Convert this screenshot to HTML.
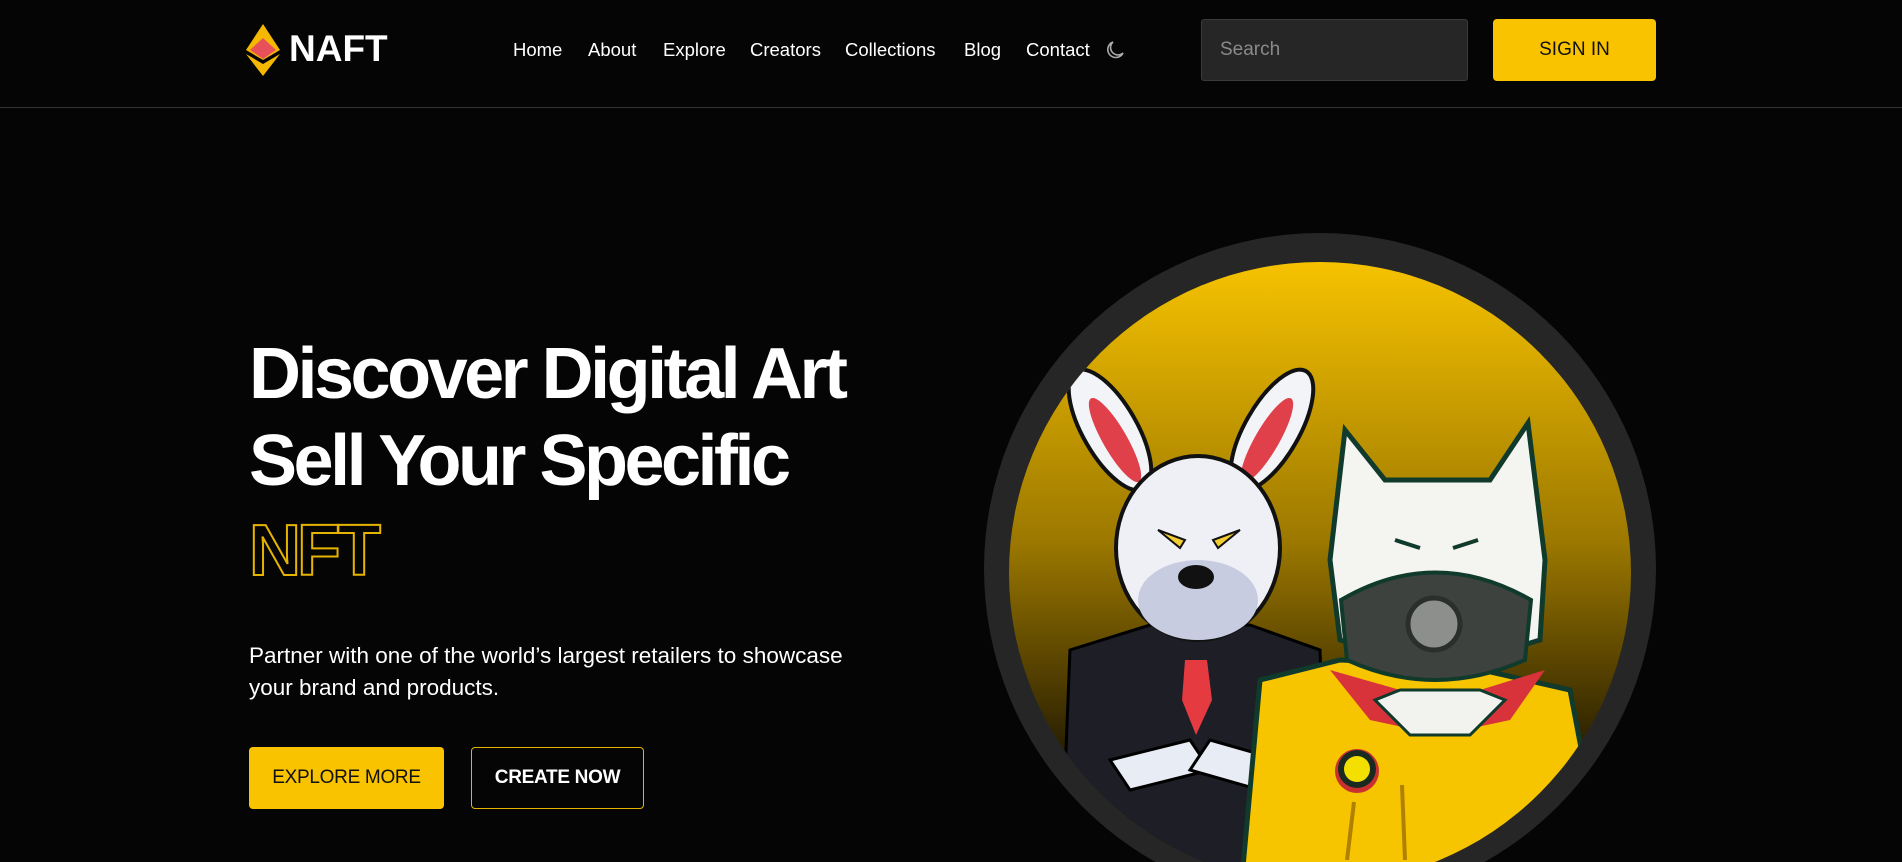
<!DOCTYPE html>
<html><head><meta charset="utf-8"><style>
*{margin:0;padding:0;box-sizing:border-box}
body{width:1902px;height:862px;overflow:hidden;background:#050505;font-family:"Liberation Sans",Arial,sans-serif;color:#fff;position:relative}
.a{position:absolute;white-space:nowrap}
.nav{top:39px;font-size:18.5px;line-height:22px;color:#fff}
h1{position:absolute;left:249px;font-size:72px;line-height:1;font-weight:700;letter-spacing:-3.5px;white-space:nowrap}
.btn{position:absolute;top:747px;height:62px;border-radius:4px;font-size:19px;font-weight:700;display:flex;align-items:center;justify-content:center;letter-spacing:-0.3px}
</style></head><body>
<!-- header -->
<svg class="a" style="left:246px;top:24px" width="34" height="52" viewBox="0 0 34 52">
<polygon points="17,0 34,26 17,36 0,26" fill="#f5b800"/>
<polygon points="0,30 17,40 34,30 17,52" fill="#f5b800"/>
<polygon points="17,14 30,26 17,35 4,26" fill="#e8515a"/>
</svg>
<div class="a" style="left:289px;top:28px;font-size:37px;font-weight:700;letter-spacing:0px;line-height:42px">NAFT</div>
<div class="a nav" style="left:513px">Home</div>
<div class="a nav" style="left:588px">About</div>
<div class="a nav" style="left:663px">Explore</div>
<div class="a nav" style="left:750px">Creators</div>
<div class="a nav" style="left:845px">Collections</div>
<div class="a nav" style="left:964px">Blog</div>
<div class="a nav" style="left:1026px">Contact</div>
<svg class="a" style="left:1105px;top:40px" width="20" height="20" viewBox="0 0 20 20"><path d="M8 2 A8 8 0 1 0 18 13 A7 7 0 0 1 8 2 Z" fill="none" stroke="#aaa" stroke-width="1.6"/></svg>
<div class="a" style="left:1201px;top:19px;width:267px;height:62px;background:#262626;border:1px solid #3a3a3a;border-radius:3px"></div>
<div class="a" style="left:1220px;top:39px;font-size:19px;color:#8a8a8a;line-height:22px">Search</div>
<div class="a" style="left:1493px;top:19px;width:163px;height:62px;background:#f9c300;border-radius:4px;color:#111;font-size:19px;display:flex;align-items:center;justify-content:center">SIGN IN</div>
<div class="a" style="left:0;top:107px;width:1902px;height:1px;background:#333"></div>

<!-- hero text -->
<h1 style="top:338px">Discover Digital Art</h1>
<h1 style="top:425px">Sell Your Specific</h1>
<h1 style="top:515px;font-weight:700;color:transparent;-webkit-text-stroke:2px #e5b400;letter-spacing:-4px">NFT</h1>
<div class="a" style="left:249px;top:640px;font-size:22.5px;line-height:32px;color:#fff">Partner with one of the world’s largest retailers to showcase<br>your brand and products.</div>
<div class="btn" style="left:249px;width:195px;background:#f9c300;color:#111;font-weight:400">EXPLORE MORE</div>
<div class="btn" style="left:471px;width:173px;border:1px solid #e5b400;color:#fff">CREATE NOW</div>

<!-- art -->
<svg class="a" style="left:0;top:0" width="1902" height="862" viewBox="0 0 1902 862">
<defs>
<linearGradient id="g" x1="0" y1="0" x2="0" y2="1">
<stop offset="0" stop-color="#f6c200"/>
<stop offset="0.45" stop-color="#9c7800"/>
<stop offset="0.8" stop-color="#241b00"/>
<stop offset="1" stop-color="#0a0800"/>
</linearGradient>
<clipPath id="c"><circle cx="1320" cy="573" r="311"/></clipPath>
</defs>
<circle cx="1320" cy="569" r="336" fill="#262626"/>
<circle cx="1320" cy="573" r="311" fill="url(#g)"/>
<g clip-path="url(#c)">
<!-- rabbit -->
<path d="M1070 650 L1150 625 L1250 625 L1320 650 L1330 900 L1060 900 Z" fill="#1d1e26" stroke="#000" stroke-width="3"/>
<polygon points="1185,660 1207,660 1212,700 1196,735 1182,700" fill="#e53a40"/>
<path d="M1110 760 L1190 740 L1210 770 L1130 790 Z" fill="#e8ecf5" stroke="#000" stroke-width="3"/>
<path d="M1280 760 L1210 740 L1190 770 L1260 790 Z" fill="#e8ecf5" stroke="#000" stroke-width="3"/>
<ellipse cx="1110" cy="430" rx="27" ry="68" transform="rotate(-30 1110 430)" fill="#f2f4f8" stroke="#111" stroke-width="4"/>
<ellipse cx="1115" cy="440" rx="12" ry="48" transform="rotate(-30 1115 440)" fill="#e0404a"/>
<ellipse cx="1272" cy="430" rx="27" ry="68" transform="rotate(30 1272 430)" fill="#f2f4f8" stroke="#111" stroke-width="4"/>
<ellipse cx="1267" cy="440" rx="12" ry="48" transform="rotate(30 1267 440)" fill="#e0404a"/>
<ellipse cx="1198" cy="548" rx="82" ry="92" fill="#eef0f6" stroke="#111" stroke-width="4"/>
<ellipse cx="1198" cy="600" rx="60" ry="40" fill="#c8cce0"/>
<path d="M1158 530 L1185 540 L1180 548 Z" fill="#f2cc30" stroke="#111" stroke-width="2"/>
<path d="M1240 530 L1213 540 L1218 548 Z" fill="#f2cc30" stroke="#111" stroke-width="2"/>
<ellipse cx="1196" cy="577" rx="18" ry="12" fill="#111"/>
<!-- wolf -->
<path d="M1260 680 L1340 660 L1460 665 L1570 690 L1610 900 L1240 900 Z" fill="#f7c400" stroke="#0f3a2c" stroke-width="5"/>
<path d="M1330 670 L1370 720 L1440 735 L1510 720 L1545 670 L1480 690 L1400 690 Z" fill="#d8333a"/>
<path d="M1375 700 L1400 690 L1480 690 L1505 700 L1470 735 L1410 735 Z" fill="#f2f2ee" stroke="#0f3a2c" stroke-width="3"/>
<path d="M1345 430 L1385 480 L1490 480 L1528 423 L1545 560 L1540 640 L1440 670 L1340 640 L1330 560 Z" fill="#f4f4f0" stroke="#0f3a2c" stroke-width="5"/>
<path d="M1341 600 Q1435 545 1531 600 L1525 660 Q1435 700 1347 660 Z" fill="#3d423f" stroke="#0f3a2c" stroke-width="4"/>
<circle cx="1434" cy="624" r="26" fill="#8c8f8c" stroke="#2a2e2c" stroke-width="5"/>
<path d="M1395 540 L1420 548 M1478 540 L1453 548" stroke="#0f3a2c" stroke-width="4"/>
<circle cx="1357" cy="771" r="22" fill="#c93030"/>
<circle cx="1357" cy="769" r="19" fill="#1a2a20"/>
<circle cx="1357" cy="769" r="13" fill="#f4e000"/>
<path d="M1354 802 L1347 860 M1402 785 L1405 860" stroke="#b08000" stroke-width="4"/>
</g>
</svg>
</body></html>
